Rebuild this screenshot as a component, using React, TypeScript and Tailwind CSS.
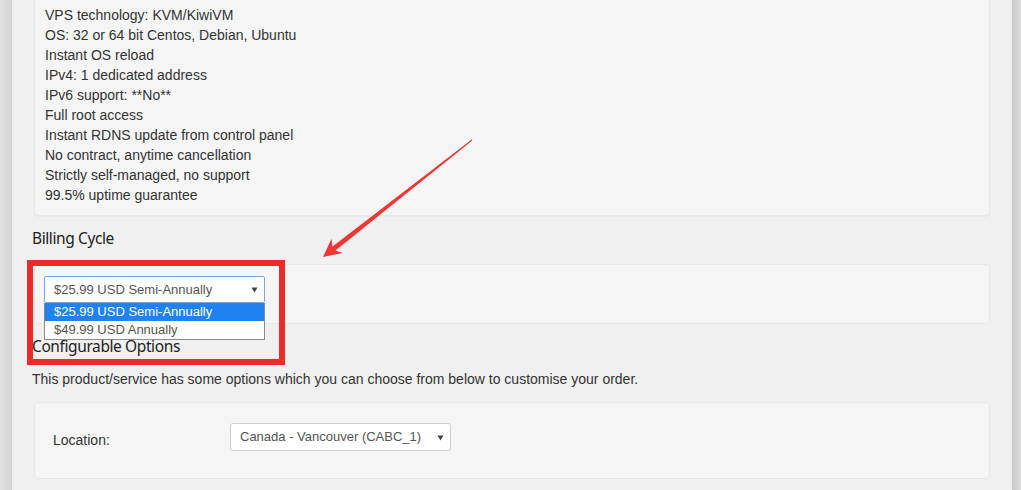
import React from 'react';

const features = [
  'VPS technology: KVM/KiwiVM',
  'OS: 32 or 64 bit Centos, Debian, Ubuntu',
  'Instant OS reload',
  'IPv4: 1 dedicated address',
  'IPv6 support: **No**',
  'Full root access',
  'Instant RDNS update from control panel',
  'No contract, anytime cancellation',
  'Strictly self-managed, no support',
  '99.5% uptime guarantee',
];

const Caret = () => (
  <svg width="7" height="7" viewBox="0 0 7 7" className="shrink-0">
    <path d="M0.5 1.5 L6.5 1.5 L3.5 6.5 Z" fill="#444" />
  </svg>
);

const App: React.FC = () => {
  return (
    <div className="relative flex w-[1021px] h-[490px] overflow-hidden bg-[#f0f0f0] text-[14px] text-[#333] font-['Liberation_Sans',Arial,sans-serif]">
      <div className="w-[12px] shrink-0 bg-gradient-to-r from-[#e2e2e2] to-[#d6d6d6] border-r border-[#cfcfcf]" />

      <main className="flex-1 flex flex-col px-[20px]">
        {/* package description */}
        <div className="mx-[2px] bg-[#f5f5f5] border border-t-0 border-[#e7e7e7] rounded-b-[4px] shadow-[0_1px_1px_rgba(0,0,0,0.03)] pl-[10px] pt-[5px] pb-[10px]">
          {features.map((f) => (
            <div key={f} className="leading-[20px]">{f}</div>
          ))}
        </div>

        <h3 className="mt-[12px] h-[20px] leading-[20px] text-[15.5px] text-[#222] font-['Noto_Sans',sans-serif] tracking-[-0.4px]">
          Billing Cycle
        </h3>

        <div className="relative mt-[16px] mx-[2px] h-[60px] bg-[#f5f5f5] border border-[#e7e7e7] rounded-[4px] pl-[9px] pt-[11px] text-[13px]">
          <div className="flex items-center justify-between w-[221px] h-[27px] bg-white border border-[#7fa6d6] rounded-[2px] pl-[9px] pr-[6px] text-[#555]">
            <span>$25.99 USD Semi-Annually</span>
            <Caret />
          </div>
          <div className="absolute z-10 left-[9px] top-[38px] w-[221px] bg-white border border-[#8a8a8a] border-t-0">
            <div className="h-[18px] leading-[18px] pl-[9px] bg-[#1e83f0] text-white">$25.99 USD Semi-Annually</div>
            <div className="h-[18px] leading-[18px] pl-[9px] text-[#555]">$49.99 USD Annually</div>
          </div>
        </div>

        <h3 className="mt-[12px] h-[20px] leading-[20px] text-[15.5px] text-[#222] font-['Noto_Sans',sans-serif] tracking-[-0.4px]">
          Configurable Options
        </h3>

        <p className="mt-[13px] leading-[20px]">
          This product/service has some options which you can choose from below to customise your order.
        </p>

        <div className="mt-[13px] mx-[2px] h-[77px] bg-[#f5f5f5] border border-[#e7e7e7] rounded-[4px] flex items-start">
          <div className="w-[195px] pl-[18px] pt-[27px] leading-[20px]">Location:</div>
          <div className="mt-[20px] flex items-center justify-between w-[221px] h-[28px] bg-white border border-[#cfcfcf] rounded-[3px] pl-[9px] pr-[6px] text-[13px] text-[#555]">
            <span>Canada - Vancouver (CABC_1)</span>
            <Caret />
          </div>
        </div>
      </main>

      <div className="w-[9px] shrink-0 bg-gradient-to-r from-[#c9c9c9] to-[#dcdcdc]" />

      {/* annotation: red box */}
      <div className="absolute left-[27px] top-[260px] w-[258px] h-[105px] border-[6px] border-[#ee2b2b] pointer-events-none z-20" />

      {/* annotation: arrow */}
      <svg className="absolute left-0 top-0 z-20 pointer-events-none" width="1021" height="490" viewBox="0 0 1021 490">
        <path d="M472.3 140.4 L335.5 250.4 L342.7 253 L323 257 L331.5 238.8 L332.5 246.4 L471.7 139.6 Z" fill="#f03535" />
      </svg>
    </div>
  );
};

export default App;
